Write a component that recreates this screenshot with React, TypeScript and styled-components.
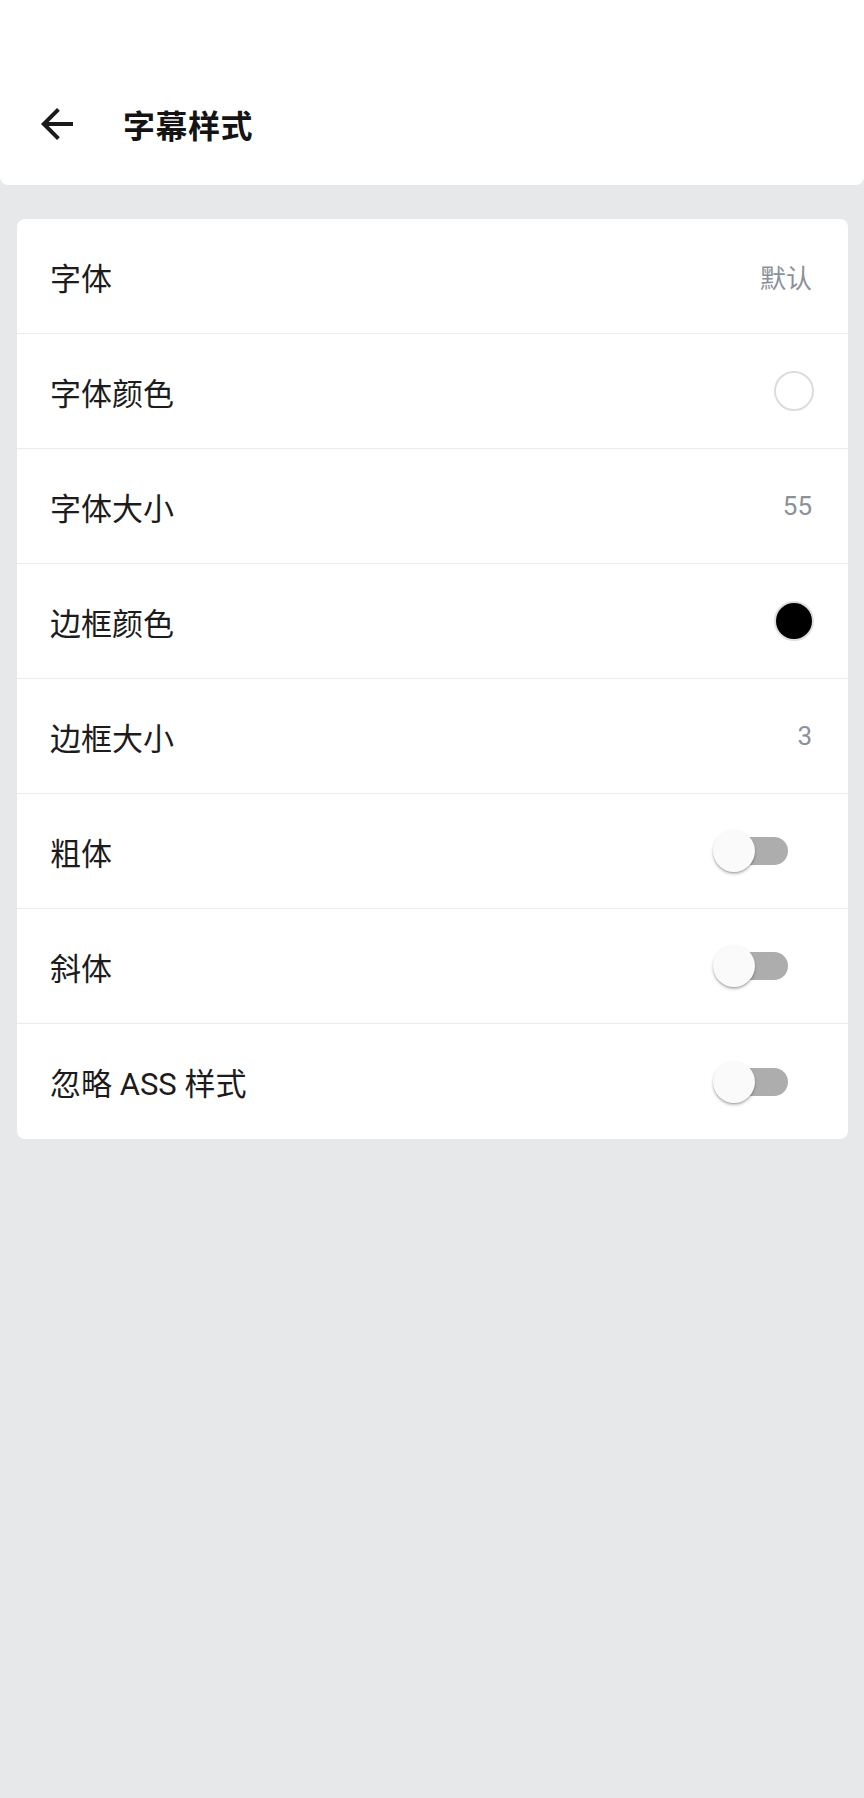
import styled, { createGlobalStyle } from "styled-components";

const GlobalStyle = createGlobalStyle`
  html, body {
    margin: 0;
    padding: 0;
    background: #e7e8ea;
  }
  body {
    font-family: Roboto, "Noto Sans CJK SC", sans-serif;
    color: #1c1c1c;
  }
`;

type Item =
  | { label: string; kind: "text"; value: string }
  | { label: string; kind: "color"; value: string }
  | { label: string; kind: "switch"; on: boolean };

const items: Item[] = [
  { label: "字体", kind: "text", value: "默认" },
  { label: "字体颜色", kind: "color", value: "#ffffff" },
  { label: "字体大小", kind: "text", value: "55" },
  { label: "边框颜色", kind: "color", value: "#000000" },
  { label: "边框大小", kind: "text", value: "3" },
  { label: "粗体", kind: "switch", on: false },
  { label: "斜体", kind: "switch", on: false },
  { label: "忽略 ASS 样式", kind: "switch", on: false },
];

const App = () => {
  return (
    <Page>
      <GlobalStyle />
      <Header>
        <BackButton aria-label="back">
          <svg viewBox="0 0 24 24" width="48" height="48">
            <path
              fill="#1a1a1a"
              d="M20 11H7.83l5.59-5.59L12 4l-8 8 8 8 1.41-1.41L7.83 13H20v-2z"
            />
          </svg>
        </BackButton>
        <Title>字幕样式</Title>
      </Header>

      <Card>
        {items.map((item) => (
          <Row key={item.label}>
            <Label>{item.label}</Label>
            {item.kind === "text" && <Value>{item.value}</Value>}
            {item.kind === "color" && <Swatch $color={item.value} />}
            {item.kind === "switch" && (
              <Switch $on={item.on}>
                <Knob $on={item.on} />
              </Switch>
            )}
          </Row>
        ))}
      </Card>
    </Page>
  );
};

const Page = styled.div`
  min-height: 1798px;
  background: #e7e8ea;
  display: flex;
  flex-direction: column;
`;

const Header = styled.header`
  height: 185px;
  box-sizing: border-box;
  padding: 86px 0 23px 33px;
  background: #ffffff;
  border-radius: 0 0 8px 8px;
  display: flex;
  align-items: center;
  gap: 42px;
`;

const BackButton = styled.div`
  width: 48px;
  height: 48px;
  display: flex;
  align-items: center;
  justify-content: center;
`;

const Title = styled.h1`
  margin: 0;
  font-size: 32px;
  font-weight: 700;
  color: #141414;
  letter-spacing: 0.5px;
`;

const Card = styled.div`
  margin: 34px 16px 0 17px;
  background: #ffffff;
  border-radius: 8px;
  overflow: hidden;
`;

const Row = styled.div`
  height: 115px;
  box-sizing: border-box;
  padding: 0 36px 0 33px;
  display: flex;
  align-items: center;
  justify-content: space-between;
  border-bottom: 1px solid #ececec;

  &:last-child {
    border-bottom: none;
  }
`;

const Label = styled.span`
  font-size: 31px;
  color: #1c1c1c;
`;

const Value = styled.span`
  font-size: 26px;
  color: #8a9199;
`;

const Swatch = styled.span<{ $color: string }>`
  width: 40px;
  height: 40px;
  box-sizing: border-box;
  border-radius: 50%;
  background: ${({ $color }) => $color};
  border: ${({ $color }) =>
    $color === "#ffffff" ? "2px solid #dcdcdc" : "2px solid #dedede"};
  margin-right: -2px;
`;

const Switch = styled.span<{ $on: boolean }>`
  position: relative;
  width: 64px;
  height: 28px;
  margin-right: 24px;
  border-radius: 14px;
  background: ${({ $on }) => ($on ? "#8fb4f0" : "#adadad")};
`;

const Knob = styled.span<{ $on: boolean }>`
  position: absolute;
  top: -7px;
  left: ${({ $on }) => ($on ? "35px" : "-11px")};
  width: 42px;
  height: 42px;
  border-radius: 50%;
  background: ${({ $on }) => ($on ? "#2f6fdf" : "#fafafa")};
  box-shadow: 0 2px 3px rgba(0, 0, 0, 0.25), 0 1px 1px rgba(0, 0, 0, 0.12);
`;

export default App;
